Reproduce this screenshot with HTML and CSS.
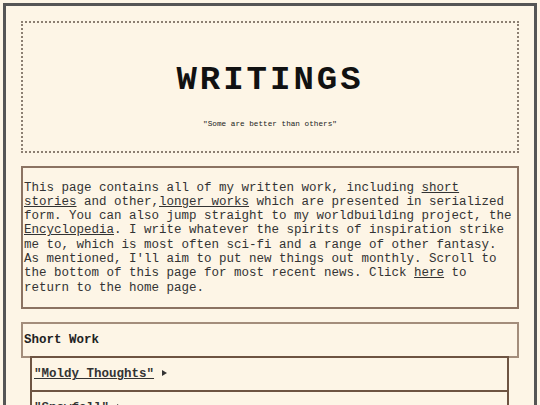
FILE: index.html
```html
<!DOCTYPE html>
<html lang="en">
<head>
    <meta charset="UTF-8">
    <meta name="viewport" content="width=device-width, initial-scale=1.0">
    <title>Writings</title>
    <link rel="stylesheet" href="styles.css">
</head>
<body>
    <div class="page">
        <header class="banner">
            <h1>WRITINGS</h1>
            <p class="tagline">"Some are better than others"</p>
        </header>

        <section class="intro">
            <p>This page contains all of my written work, including <a href="#short">short stories</a> and other,<a href="#long">longer works</a> which are presented in serialized form. You can also jump straight to my worldbuilding project, the <a href="#encyclopedia">Encyclopedia</a>. I write whatever the spirits of inspiration strike me to, which is most often sci-fi and a range of other fantasy. As mentioned, I'll aim to put new things out monthly. Scroll to the bottom of this page for most recent news. Click <a href="#home">here</a> to return to the home page.</p>
        </section>

        <section id="short" class="works">
            <h2>Short Work</h2>
            <ul class="work-list">
                <li><a href="#moldy">"Moldy Thoughts"</a> <span class="arrow"></span></li>
                <li><a href="#snowfall">"Snowfall"</a> <span class="arrow"></span></li>
            </ul>
        </section>
    </div>
</body>
</html>
```

FILE: styles.css
```css
html {
    background-color: #fdf5e6;
}
body {
    margin: 0;
    font-family: 'Liberation Mono', 'Courier New', monospace;
    font-size: 12.5px;
    color: #333;
}
a {
    color: #333;
}
.page {
    margin: 3px;
    border: 3px solid #555;
    padding: 15px;
    background-color: #fdf5e6;
}
.banner {
    border: 2px dotted #8c7f72;
    padding: 37px 0 22px;
    text-align: center;
}
.banner h1 {
    margin: 0 0 19px;
    font-size: 34px;
    line-height: 40px;
    letter-spacing: 3px;
    color: #111;
}
.tagline {
    margin: 0;
    font-size: 7.7px;
    line-height: 10px;
    color: #222;
}
.intro {
    margin-top: 13px;
    border: 2px solid #8b7362;
    padding: 0 1px;
}
.intro p {
    margin: 12.5px 0;
    line-height: 14.3px;
}
.works {
    margin-top: 13px;
}
.works h2 {
    margin: 0;
    border: 2px solid #a38d7b;
    padding: 9px 1px;
    font-size: 12.5px;
    line-height: 14px;
    color: #222;
}
.work-list {
    list-style: none;
    margin: 0 10px 0 9px;
    padding: 0;
}
.work-list li {
    border: 2px solid #6e5442;
    border-top: 0;
    padding: 9px 2px;
    line-height: 14px;
    font-weight: bold;
}
.work-list li:first-child {
    border-top: 2px solid #6e5442;
    margin-top: -2px;
}
/* small play-style marker after each title */
.arrow {
    display: inline-block;
    width: 0;
    height: 0;
    border-left: 5px solid #333;
    border-top: 3px solid transparent;
    border-bottom: 3px solid transparent;
    vertical-align: 1px;
}
```
